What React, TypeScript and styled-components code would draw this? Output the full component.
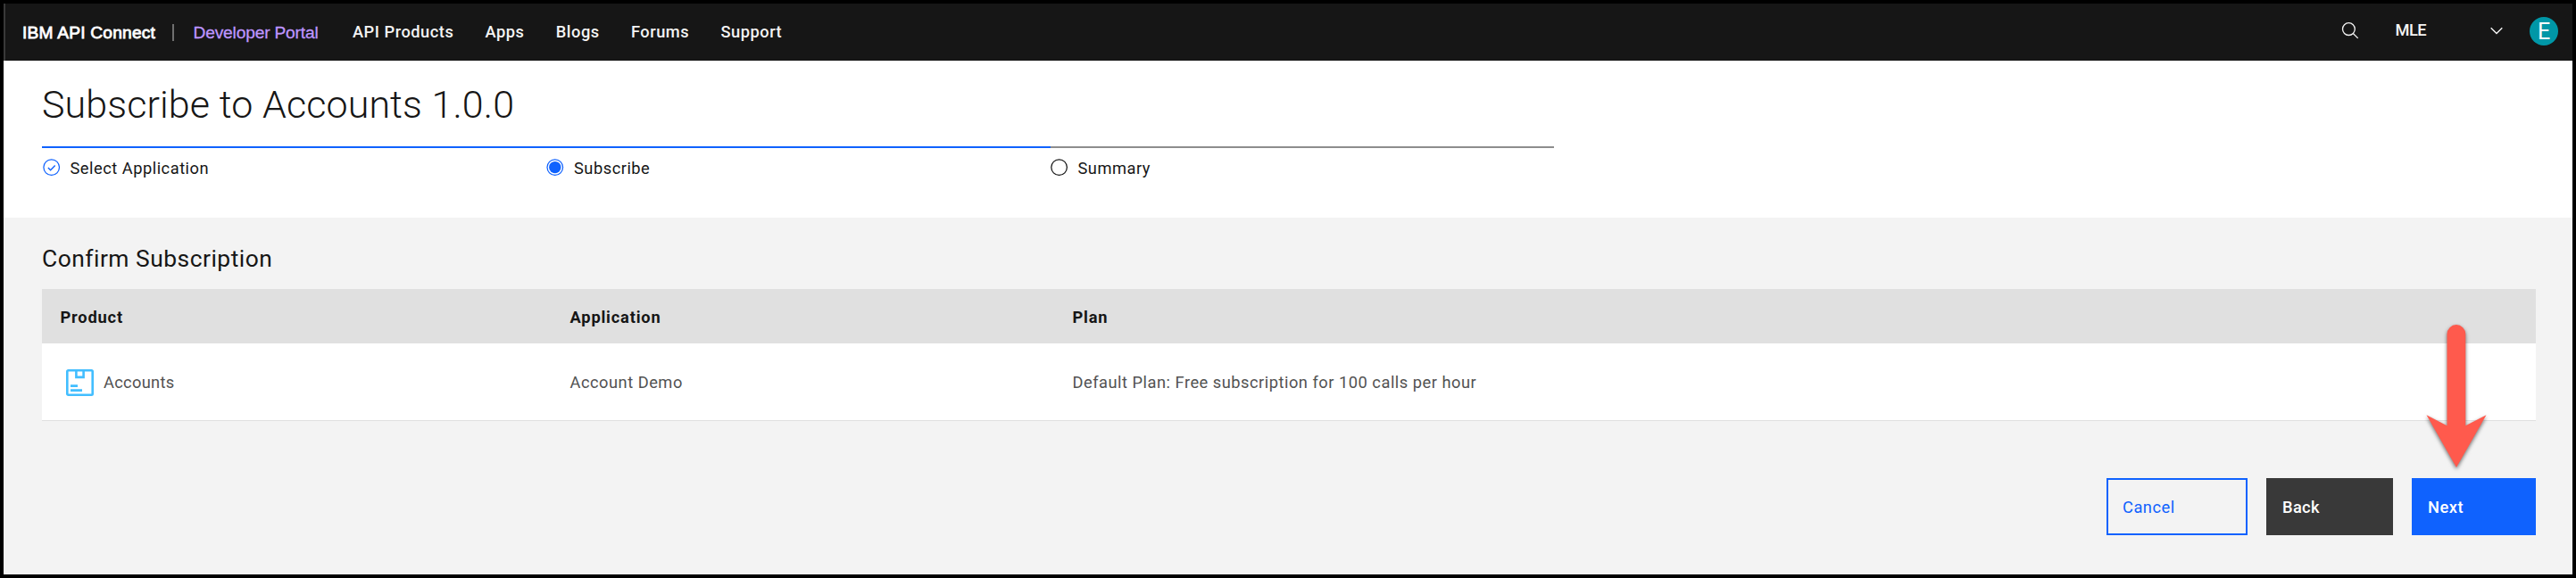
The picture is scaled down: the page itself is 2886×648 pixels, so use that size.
import React from 'react';
import styled, { createGlobalStyle } from 'styled-components';

const GlobalStyle = createGlobalStyle`
  *, *::before, *::after { box-sizing: border-box; }
  body {
    margin: 0;
    background: #000;
    color: #161616;
    font-family: Roboto, "Liberation Sans", sans-serif;
    font-size: 18.3px;
    line-height: 24px;
    letter-spacing: 0.5px;
  }
`;

const Frame = styled.div`
  display: flex;
  flex-direction: column;
  width: 2886px;
  height: 648px;
  border: 4px solid #000;
  background: #f3f3f3;
  overflow: hidden;
`;

const Header = styled.header`
  display: flex;
  align-items: center;
  height: 64px;
  flex: none;
  padding: 0 16px 0 19px;
  border-left: 2px solid #393939;
  background: #161616;
  color: #f4f4f4;
`;

const Brand = styled.div`
  display: flex;
  align-items: center;
  width: 370px;
  padding-top: 1px;
  font-family: "Liberation Sans", Arial, sans-serif;
  font-size: 19.2px;
`;

const BrandName = styled.span`
  width: 168px;
  color: #fff;
  letter-spacing: 0.2px;
  white-space: nowrap;
  -webkit-text-stroke: 0.8px #fff;
`;

const BrandDivider = styled.span`
  width: 2px;
  height: 19px;
  margin-right: 21.5px;
  background: #6f6f6f;
`;

const PortalName = styled.span`
  color: #be95ff;
  letter-spacing: -0.18px;
  white-space: nowrap;
  -webkit-text-stroke: 0.3px #be95ff;
`;

const Nav = styled.nav`
  display: flex;
  gap: 35.3px;
`;

const NavLink = styled.a`
  color: #f4f4f4;
  font-weight: 500;
  white-space: nowrap;
`;

const Tools = styled.div`
  display: flex;
  align-items: center;
  margin-left: auto;
  padding-bottom: 2px;
  svg { display: block; }
`;

const OrgName = styled.span`
  width: 106.5px;
  margin-left: 40.5px;
  padding-bottom: 2px;
  font-weight: 500;
  letter-spacing: -0.6px;
`;

const Avatar = styled.span`
  width: 32px;
  height: 32px;
  margin-left: 30px;
  border-radius: 50%;
  background: #0097a7;
  color: #fff;
  font-size: 25px;
  line-height: 33px;
  text-align: center;
  letter-spacing: 0;
`;

const Intro = styled.section`
  height: 176px;
  flex: none;
  padding: 21px 43px 0;
  background: #fff;
`;

const Title = styled.h1`
  margin: 0;
  font-size: 43px;
  font-weight: 300;
  line-height: 56px;
  letter-spacing: 0.1px;
`;

const Steps = styled.ol`
  display: flex;
  width: 1694px;
  margin: 19px 0 0;
  padding: 0;
  list-style: none;
`;

const Step = styled.li<{ $reached?: boolean; $width: number; $gap: number }>`
  display: flex;
  gap: ${(p) => p.$gap}px;
  width: ${(p) => p.$width}px;
  padding-top: 11px;
  border-top: 2px solid ${(p) => (p.$reached ? '#0f62fe' : '#8d8d8d')};
  svg { display: block; flex: none; }
`;

const StepLabel = styled.span`
  line-height: 23px;
`;

const Content = styled.main`
  display: flex;
  flex-direction: column;
  padding: 29px 41px 0 43px;
`;

const SectionTitle = styled.h2`
  margin: 0 0 17px;
  font-size: 26.4px;
  font-weight: 400;
  line-height: 34px;
`;

const Table = styled.div`
  height: 148px;
  border-bottom: 1px solid #e0e0e0;
`;

const Row = styled.div<{ $head?: boolean }>`
  display: grid;
  grid-template-columns: 571px 563px 1fr;
  align-items: center;
  height: ${(p) => (p.$head ? 61 : 86)}px;
  padding-top: ${(p) => (p.$head ? 2 : 1)}px;
  background: ${(p) => (p.$head ? '#e0e0e0' : '#fff')};
  color: ${(p) => (p.$head ? '#161616' : '#525252')};
  font-weight: ${(p) => (p.$head ? 700 : 400)};
  letter-spacing: ${(p) => (p.$head ? 0.8 : 0.5)}px;
`;

const Cell = styled.div`
  display: flex;
  align-items: center;
  padding-left: 20.5px;
`;

const ProductIcon = styled.svg`
  display: block;
  margin: 0 11px 0 6.5px;
`;

const ProductName = styled.span`
  letter-spacing: 0.3px;
`;

const Actions = styled.div`
  display: flex;
  justify-content: flex-end;
  gap: 21px;
  margin-top: 64px;
`;

const Button = styled.button<{ $kind: 'outline' | 'dark' | 'primary'; $width: number }>`
  width: ${(p) => p.$width}px;
  height: 64px;
  padding: 1px 0 0 16px;
  border: 2px solid ${(p) => (p.$kind === 'dark' ? '#393939' : '#0f62fe')};
  background: ${(p) => ({ outline: 'transparent', dark: '#393939', primary: '#0f62fe' })[p.$kind]};
  color: ${(p) => (p.$kind === 'outline' ? '#0f62fe' : '#fff')};
  font: ${(p) => (p.$kind === 'outline' ? 400 : 500)} 18.3px/24px Roboto, sans-serif;
  letter-spacing: ${(p) => (p.$kind === 'dark' ? 0.35 : 0.5)}px;
  text-align: left;
`;

const Pointer = styled.svg`
  position: absolute;
  left: 2712px;
  top: 360px;
  filter: drop-shadow(0 2px 2px rgba(0, 0, 0, 0.55));
`;

const navItems = ['API Products', 'Apps', 'Blogs', 'Forums', 'Support'];

export default function App() {
  return (
    <>
      <GlobalStyle />
      <Frame>
        <Header>
          <Brand>
            <BrandName>IBM API Connect</BrandName>
            <BrandDivider />
            <PortalName>Developer Portal</PortalName>
          </Brand>
          <Nav>
            {navItems.map((item) => (
              <NavLink key={item}>{item}</NavLink>
            ))}
          </Nav>
          <Tools>
            <svg width="20" height="20" viewBox="0 0 20 20" fill="none" stroke="#f4f4f4" strokeWidth="1.3">
              <circle cx="8.4" cy="7.6" r="6.9" />
              <path d="M13.3 12.5l5.4 5.4" />
            </svg>
            <OrgName>MLE</OrgName>
            <svg width="14" height="10" viewBox="0 0 14 10" fill="none" stroke="#f4f4f4" strokeWidth="1.4">
              <path d="M0.7 1.2L7 7.4L13.3 1.2" />
            </svg>
            <Avatar>E</Avatar>
          </Tools>
        </Header>

        <Intro>
          <Title>Subscribe to Accounts 1.0.0</Title>
          <Steps>
            <Step $reached $width={565} $gap={10.5}>
              <svg width="21" height="21" viewBox="0 0 21 21" fill="none" stroke="#0f62fe">
                <circle cx="10.7" cy="10.6" r="8.8" strokeWidth="1.25" />
                <path d="M6.9 11.1l2.7 2.6 5.1-5.2" strokeWidth="1.4" />
              </svg>
              <StepLabel>Select Application</StepLabel>
            </Step>
            <Step $reached $width={565} $gap={10}>
              <svg width="21" height="21" viewBox="0 0 21 21">
                <circle cx="9.8" cy="10.6" r="8.8" fill="none" stroke="#0f62fe" strokeWidth="1.25" />
                <circle cx="9.8" cy="10.6" r="6.7" fill="#0f62fe" />
              </svg>
              <StepLabel>Subscribe</StepLabel>
            </Step>
            <Step $width={564} $gap={9.5}>
              <svg width="21" height="21" viewBox="0 0 21 21">
                <circle cx="9.6" cy="10.6" r="8.8" fill="none" stroke="#161616" strokeWidth="1.25" />
              </svg>
              <StepLabel>Summary</StepLabel>
            </Step>
          </Steps>
        </Intro>

        <Content>
          <SectionTitle>Confirm Subscription</SectionTitle>
          <Table>
            <Row $head>
              <Cell>Product</Cell>
              <Cell>Application</Cell>
              <Cell>Plan</Cell>
            </Row>
            <Row>
              <Cell>
                <ProductIcon width="31" height="30" viewBox="0 0 31 30" fill="none" stroke="#42beff" strokeWidth="2.6">
                  <rect x="1.3" y="1.3" width="28.4" height="27.4" rx="1.2" />
                  <path d="M11.4 1.3v7.6h8.2V1.3M5 18.6h8M5 23.6h13" />
                </ProductIcon>
                <ProductName>Accounts</ProductName>
              </Cell>
              <Cell>Account Demo</Cell>
              <Cell>Default Plan: Free subscription for 100 calls per hour</Cell>
            </Row>
          </Table>
          <Actions>
            <Button $kind="outline" $width={158}>Cancel</Button>
            <Button $kind="dark" $width={142}>Back</Button>
            <Button $kind="primary" $width={139}>Next</Button>
          </Actions>
        </Content>
      </Frame>
      <Pointer width="80" height="170" viewBox="0 0 80 170">
        <path
          d="M29.5 14.5a10.4 10.4 0 0 1 20.8 0V117.3L73.5 105.3L40 164L6.5 105.3L29.5 117.3Z"
          fill="#ff5a4d"
        />
      </Pointer>
    </>
  );
}
